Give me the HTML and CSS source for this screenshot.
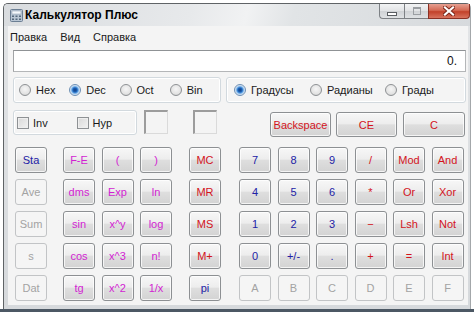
FILE: index.html
```html
<!DOCTYPE html>
<html lang="ru">
<head>
    <meta charset="UTF-8">
    <title>Калькулятор Плюс</title>
    <link rel="stylesheet" href="styles.css">
</head>
<body>
    <div class="window">
        <div class="titlebar">
            <svg class="app-icon" width="13" height="13" viewBox="0 0 13 13">
                <rect x="0.5" y="0.5" width="12" height="12" rx="1" fill="#b9c6d4" stroke="#6c7f94"/>
                <rect x="2" y="2" width="9" height="3" fill="#f4f8fc" stroke="#8899aa" stroke-width="0.5"/>
                <rect x="2" y="6.5" width="2" height="1.5" fill="#55687c"/>
                <rect x="5.5" y="6.5" width="2" height="1.5" fill="#55687c"/>
                <rect x="9" y="6.5" width="2" height="1.5" fill="#55687c"/>
                <rect x="2" y="9.5" width="2" height="1.5" fill="#55687c"/>
                <rect x="5.5" y="9.5" width="2" height="1.5" fill="#55687c"/>
                <rect x="9" y="9.5" width="2" height="1.5" fill="#55687c"/>
            </svg>
            <span class="title">Калькулятор Плюс</span>
            <div class="caption-buttons">
                <div class="cap-btn cap-min"><span class="min-glyph"></span></div>
                <div class="cap-btn cap-max"><span class="max-glyph"></span></div>
                <div class="cap-btn cap-close">
                    <svg width="12" height="10" viewBox="0 0 12 10">
                        <path d="M2 1.5 L10 8.5 M10 1.5 L2 8.5" stroke="#7a2518" stroke-width="4" stroke-linecap="square"/>
                        <path d="M2 1.5 L10 8.5 M10 1.5 L2 8.5" stroke="#ffffff" stroke-width="2.2" stroke-linecap="square"/>
                    </svg>
                </div>
            </div>
        </div>

        <div class="client">
            <div class="menubar">
                <span>Правка</span>
                <span>Вид</span>
                <span>Справка</span>
            </div>

            <div class="display">0.</div>

            <div class="modes">
                <div class="group base">
                    <label class="radio"><span class="dot"></span>Hex</label>
                    <label class="radio on"><span class="dot"></span>Dec</label>
                    <label class="radio"><span class="dot"></span>Oct</label>
                    <label class="radio"><span class="dot"></span>Bin</label>
                </div>
                <div class="group angle">
                    <label class="radio on"><span class="dot"></span>Градусы</label>
                    <label class="radio"><span class="dot"></span>Радианы</label>
                    <label class="radio"><span class="dot"></span>Грады</label>
                </div>
            </div>

            <div class="controls">
                <div class="group flags">
                    <label class="check"><span class="box"></span>Inv</label>
                    <label class="check"><span class="box"></span>Hyp</label>
                </div>
                <div class="well"></div>
                <div class="well second"></div>
                <div class="edit-keys">
                    <div class="key red">Backspace</div>
                    <div class="key red">CE</div>
                    <div class="key red">C</div>
                </div>
            </div>

            <div class="pad">
                <div class="keys col1 stat">
                    <div class="key blue">Sta</div>
                    <div class="key off">Ave</div>
                    <div class="key off">Sum</div>
                    <div class="key off">s</div>
                    <div class="key off">Dat</div>
                </div>
                <div class="keys col3 sci">
                    <div class="key pink">F-E</div>
                    <div class="key pink">(</div>
                    <div class="key pink">)</div>
                    <div class="key pink">dms</div>
                    <div class="key pink">Exp</div>
                    <div class="key pink">ln</div>
                    <div class="key pink">sin</div>
                    <div class="key pink">x^y</div>
                    <div class="key pink">log</div>
                    <div class="key pink">cos</div>
                    <div class="key pink">x^3</div>
                    <div class="key pink">n!</div>
                    <div class="key pink">tg</div>
                    <div class="key pink">x^2</div>
                    <div class="key pink">1/x</div>
                </div>
                <div class="keys col1 mem">
                    <div class="key red">MC</div>
                    <div class="key red">MR</div>
                    <div class="key red">MS</div>
                    <div class="key red">M+</div>
                    <div class="key blue">pi</div>
                </div>
                <div class="keys col6 main">
                    <div class="key blue">7</div>
                    <div class="key blue">8</div>
                    <div class="key blue">9</div>
                    <div class="key red">/</div>
                    <div class="key red">Mod</div>
                    <div class="key red">And</div>
                    <div class="key blue">4</div>
                    <div class="key blue">5</div>
                    <div class="key blue">6</div>
                    <div class="key red">*</div>
                    <div class="key red">Or</div>
                    <div class="key red">Xor</div>
                    <div class="key blue">1</div>
                    <div class="key blue">2</div>
                    <div class="key blue">3</div>
                    <div class="key red">&minus;</div>
                    <div class="key red">Lsh</div>
                    <div class="key red">Not</div>
                    <div class="key blue">0</div>
                    <div class="key blue">+/-</div>
                    <div class="key blue">.</div>
                    <div class="key red">+</div>
                    <div class="key red">=</div>
                    <div class="key red">Int</div>
                    <div class="key off">A</div>
                    <div class="key off">B</div>
                    <div class="key off">C</div>
                    <div class="key off">D</div>
                    <div class="key off">E</div>
                    <div class="key off">F</div>
                </div>
            </div>
        </div>
    </div>
    <div class="taskbar"></div>
</body>
</html>
```

FILE: styles.css
```css
* {
    margin: 0;
    padding: 0;
    box-sizing: border-box;
}

body {
    font-family: "Liberation Sans", Arial, sans-serif;
    font-size: 11px;
    color: #111;
    background: #ffffff;
    width: 474px;
    height: 312px;
    overflow: hidden;
    padding: 3px 0 0 3px;
}

.window {
    width: 468px;
    height: 306px;
    border: 1px solid #5f6366;
    border-right-color: #a3a7aa;
    border-bottom: none;
    border-radius: 5px 5px 0 0;
    background: linear-gradient(#e3e5e7, #d6d9dc);
    display: flex;
    flex-direction: column;
}

.titlebar {
    height: 22px;
    display: flex;
    align-items: flex-start;
    border-radius: 4px 4px 0 0;
    background: linear-gradient(105deg, #d9dcdf 0%, #e7e9eb 40%, #f1f2f3 52%, #e1e4e6 62%, #d7dadd 100%);
}

.app-icon {
    margin: 5px 0 0 6px;
    flex-shrink: 0;
}

.title {
    margin: 4px 0 0 2px;
    font-weight: bold;
    font-size: 12px;
    line-height: 15px;
    color: #000;
}

.caption-buttons {
    margin-left: auto;
    display: flex;
    height: 15px;
}

.cap-btn {
    height: 15px;
    border: 1px solid #7d8185;
    border-top: none;
    display: flex;
    align-items: center;
    justify-content: center;
    background: linear-gradient(#f2f3f4 0%, #e1e3e5 50%, #cfd2d5 51%, #dfe2e4 100%);
}

.cap-min {
    width: 25px;
    border-radius: 0 0 0 4px;
    border-right: none;
}

.cap-max {
    width: 24px;
    border-right: none;
}

.cap-close {
    width: 42px;
    border-radius: 0 0 4px 0;
    border-color: #8a3024;
    background: linear-gradient(#e6a091 0%, #d46a55 45%, #c2412a 55%, #d8735e 100%);
}

.min-glyph {
    width: 10px;
    height: 4px;
    margin-top: 5px;
    background: #ffffff;
    border: 1px solid #5a5e62;
}

.max-glyph {
    width: 8px;
    height: 8px;
    border: 1px solid #9a9ea2;
    border-top-width: 2px;
}

.client {
    flex: 1;
    margin: 0 2px 4px 4px;
    padding: 0 2px 0 5px;
    background: #f4f4f4;
    display: flex;
    flex-direction: column;
}

.menubar {
    height: 19px;
    margin-left: -3px;
    display: flex;
    gap: 13px;
    padding-top: 5px;
    line-height: 13px;
    color: #1a1a1a;
}

.display {
    margin-top: 5px;
    height: 22px;
    border: 1px solid #b4b6b8;
    border-top-color: #8f9295;
    border-left-color: #a2a4a6;
    background: #ffffff;
    text-align: right;
    padding-right: 8px;
    font-size: 12px;
    line-height: 20px;
}

.modes {
    margin-top: 5px;
    height: 26px;
    display: flex;
    gap: 5px;
}

.group {
    border: 1px solid #d2d9de;
    border-radius: 3px;
    box-shadow: inset 0 0 0 1px #ffffff;
    display: flex;
    align-items: center;
}

.base {
    width: 208px;
    padding-left: 5px;
}

.base .radio {
    width: 51px;
}

.angle {
    width: 241px;
    padding-left: 7px;
}

.angle .radio:nth-child(1) {
    width: 76px;
}

.angle .radio:nth-child(2) {
    width: 75px;
}

.radio,
.check {
    display: flex;
    align-items: center;
    gap: 5px;
    color: #1a1a1a;
}

.dot {
    width: 12px;
    height: 12px;
    border-radius: 50%;
    border: 1px solid #8e9194;
    background: radial-gradient(circle at 50% 40%, #f6f6f6 0, #e2e2e2 5px, #d4d4d4 6px);
}

.radio.on .dot {
    border-color: #6d8fb4;
    background: radial-gradient(circle at 50% 50%, #0f3f86 0, #1e5fb2 2px, #4d96df 3px, #a9cdf0 4px, #e4ecf4 5px, #d8dde2 6px);
}

.controls {
    margin-top: 7px;
    height: 27px;
    display: flex;
    align-items: flex-start;
}

.flags {
    width: 124px;
    height: 25px;
    padding-left: 3px;
}

.check {
    width: 62px;
    gap: 4px;
}

.box {
    width: 12px;
    height: 12px;
    border: 1px solid #8e9194;
    background: linear-gradient(135deg, #d8d8d8, #f2f2f2);
    box-shadow: inset 0 0 0 1px #eeeeee;
}

.well {
    width: 24px;
    height: 24px;
    margin-left: 7px;
    border: 1px solid #dadada;
    border-top-color: #9c9c9c;
    border-left-color: #9c9c9c;
    border-top-width: 2px;
    border-left-width: 2px;
}

.well.second {
    margin-left: 25px;
}

.edit-keys {
    margin: 2px 1px 0 auto;
    display: flex;
    gap: 5px;
}

.edit-keys .key {
    width: 61px;
    height: 25px;
}

.edit-keys .key:last-child {
    width: 62px;
    margin-left: 1px;
}

.pad {
    margin: 10px 0 0 2px;
    display: flex;
}

.keys {
    display: grid;
    grid-auto-rows: 26px;
    row-gap: 6px;
    column-gap: 6.5px;
}

.col1 {
    grid-template-columns: 32px;
}

.col3 {
    grid-template-columns: repeat(3, 32px);
}

.col6 {
    grid-template-columns: repeat(6, 32px);
}

.sci {
    margin-left: 16px;
}

.mem {
    margin-left: 17px;
}

.main {
    margin-left: 18px;
}

.key {
    border: 1px solid #8d9093;
    border-radius: 3px;
    background: linear-gradient(#f7f7f7 0%, #ededed 46%, #dedede 52%, #d3d3d3 100%);
    box-shadow: inset 0 0 0 1px rgba(255, 255, 255, 0.75);
    display: flex;
    align-items: center;
    justify-content: center;
    font-size: 11px;
}

.key.blue {
    color: #2222a6;
}

.key.red {
    color: #d3141c;
}

.key.pink {
    color: #d21ed2;
}

.key.off {
    background: #f5f5f5;
    border-color: #c2c4c6;
    box-shadow: none;
    color: #a3a3a3;
}

.taskbar {
    height: 3px;
    margin-left: -3px;
    background: #4c5864;
}
```
